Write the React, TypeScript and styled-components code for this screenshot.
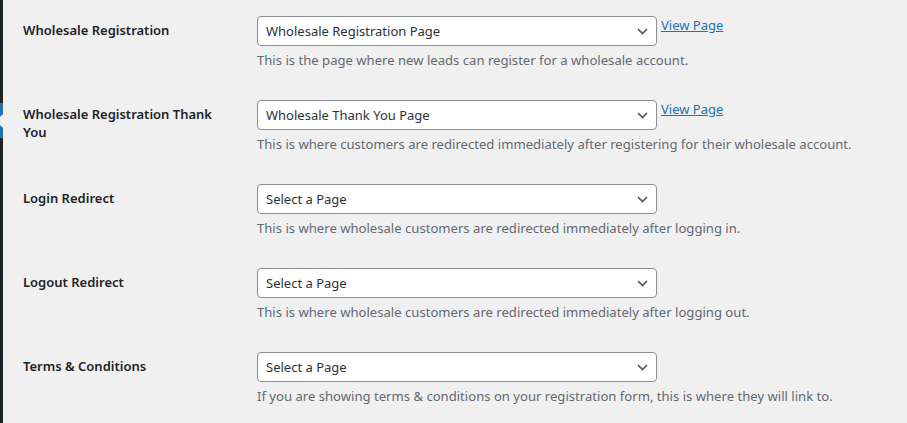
import React from "react";
import styled, { createGlobalStyle } from "styled-components";

const Global = createGlobalStyle`
  html, body { margin: 0; padding: 0; background: #f0f0f1; }
  body { font-family: "Segoe UI", "Noto Sans", "Liberation Sans", sans-serif; }
  * { box-sizing: border-box; }
`;

const Page = styled.div`
  display: flex;
  width: 907px;
  height: 423px;
  overflow: hidden;
  background: #f0f0f1;
`;

const Sidebar = styled.div`
  width: 3px;
  flex: none;
  background: #1d2327;
  display: flex;
  flex-direction: column;
  overflow: hidden;
`;

const SideSpacer = styled.div`
  height: 103px;
  flex: none;
`;

const SideCurrent = styled.div`
  position: relative;
  height: 35px;
  flex: none;
  background: #2271b1;
  &::after {
    content: "";
    position: absolute;
    right: 0;
    top: 50%;
    margin-top: -7px;
    border-style: solid;
    border-width: 7px 7px 7px 0;
    border-color: transparent #f0f0f1 transparent transparent;
  }
`;

const Content = styled.div`
  flex: 1;
  padding: 1px 0 0 20px;
`;

const Table = styled.div`
  display: grid;
  grid-template-columns: 200px 1fr;
  column-gap: 34px;
`;

const Label = styled.div`
  padding: 20px 0 0 0;
  font-size: 13px;
  font-weight: 600;
  line-height: 18px;
  color: #1d2327;
  min-height: 84px;
`;

const Cell = styled.div`
  padding: 15px 0 15px 0;
`;

const FieldLine = styled.div`
  display: flex;
  align-items: flex-start;
  gap: 4px;
`;

const SelectWrap = styled.div`
  position: relative;
  width: 400px;
  height: 30px;
`;

const Select = styled.select`
  appearance: none;
  -webkit-appearance: none;
  width: 100%;
  height: 30px;
  margin: 0;
  padding: 0 24px 0 8px;
  border: 1px solid #8c8f94;
  border-radius: 4px;
  background: #fff;
  color: #2c3338;
  font-family: inherit;
  font-size: 13px;
  line-height: 28px;
  outline: none;
`;

const Chevron = styled.svg`
  position: absolute;
  right: 9px;
  top: 12px;
  width: 11px;
  height: 7px;
  pointer-events: none;
`;

const ViewLink = styled.a`
  color: #2271b1;
  text-decoration: underline;
  font-size: 13px;
  line-height: 18px;
  margin-top: 0;
  cursor: pointer;
`;

const Description = styled.p`
  margin: 4px 0 0;
  font-size: 13.1px;
  line-height: 20px;
  color: #646970;
`;

type Row = { label: string; value: string; link?: boolean; desc: string };

const rows: Row[] = [
  {
    label: "Wholesale Registration",
    value: "Wholesale Registration Page",
    link: true,
    desc: "This is the page where new leads can register for a wholesale account.",
  },
  {
    label: "Wholesale Registration Thank You",
    value: "Wholesale Thank You Page",
    link: true,
    desc: "This is where customers are redirected immediately after registering for their wholesale account.",
  },
  {
    label: "Login Redirect",
    value: "Select a Page",
    desc: "This is where wholesale customers are redirected immediately after logging in.",
  },
  {
    label: "Logout Redirect",
    value: "Select a Page",
    desc: "This is where wholesale customers are redirected immediately after logging out.",
  },
  {
    label: "Terms & Conditions",
    value: "Select a Page",
    desc: "If you are showing terms & conditions on your registration form, this is where they will link to.",
  },
];

export default function App() {
  return (
    <>
      <Global />
      <Page>
        <Sidebar>
          <SideSpacer />
          <SideCurrent />
        </Sidebar>
        <Content>
          <Table>
            {rows.map((r) => (
              <React.Fragment key={r.label}>
                <Label>{r.label}</Label>
                <Cell>
                  <FieldLine>
                    <SelectWrap>
                      <Select defaultValue={r.value}>
                        <option value={r.value}>{r.value}</option>
                      </Select>
                      <Chevron viewBox="0 0 11 7">
                        <polyline
                          points="1,1 5.5,5.5 10,1"
                          fill="none"
                          stroke="#50575e"
                          strokeWidth="1.6"
                        />
                      </Chevron>
                    </SelectWrap>
                    {r.link && <ViewLink>View Page</ViewLink>}
                  </FieldLine>
                  <Description>{r.desc}</Description>
                </Cell>
              </React.Fragment>
            ))}
          </Table>
        </Content>
      </Page>
    </>
  );
}
